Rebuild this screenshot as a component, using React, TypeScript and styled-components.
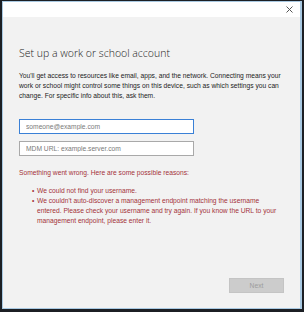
import React from "react";
import styled, { createGlobalStyle } from "styled-components";

const colors = {
  frame: "#1c1f24",
  accent: "#a9c9e2",
  titleBar: "#ffffff",
  body: "#f2f2f2",
  text: "#1f1f1f",
  error: "#a4323a",
  focus: "#3a80d6",
  field: "#a9a9a9",
  placeholder: "#7a7a7a",
};

const GlobalStyle = createGlobalStyle`
  html, body {
    margin: 0;
    padding: 0;
    background: ${colors.frame};
  }
  * {
    box-sizing: border-box;
  }
`;

const Frame = styled.div`
  width: 304px;
  height: 312px;
  padding: 1px 2px 3px 2px;
  background: ${colors.frame};
  display: flex;
`;

const Window = styled.div`
  flex: 1;
  display: flex;
  flex-direction: column;
  border: 1px solid ${colors.accent};
  border-right-width: 2px;
  background: ${colors.body};
  font-family: "Liberation Sans", Arial, sans-serif;
  color: ${colors.text};
`;

const TitleBar = styled.div`
  height: 15px;
  background: ${colors.titleBar};
  display: flex;
  justify-content: flex-end;
  align-items: center;
  padding-right: 6px;
`;

const CloseButton = styled.button`
  width: 9px;
  height: 9px;
  padding: 0;
  border: none;
  background: none;
  display: flex;
  align-items: center;
  justify-content: center;
`;

const Body = styled.div`
  flex: 1;
  display: flex;
  flex-direction: column;
  padding: 29px 16px 15px 16px;
`;

const Heading = styled.h1`
  margin: 0;
  font-family: "Open Sans", "Liberation Sans", sans-serif;
  font-weight: 300;
  font-size: 10.5px;
  line-height: 14px;
  color: #222;
`;

const Intro = styled.p`
  margin: 11px 0 0 0;
  font-size: 6.7px;
  line-height: 10px;
  color: #222;
`;

const Fields = styled.div`
  display: flex;
  flex-direction: column;
  gap: 7px;
  margin-top: 18px;
`;

const Field = styled.input<{ $focused?: boolean }>`
  width: 175px;
  height: 15px;
  margin: 0;
  padding: 0 0 0 6px;
  background: #fff;
  border: 1px solid ${(p) => (p.$focused ? colors.focus : colors.field)};
  font-family: "Liberation Sans", Arial, sans-serif;
  font-size: 6.7px;
  color: ${colors.text};
  caret-color: #000;
  outline: none;
  &:focus {
    border-color: ${colors.focus};
  }
  &::placeholder {
    color: ${colors.placeholder};
  }
`;

const ErrorBlock = styled.div`
  margin-top: 12px;
  color: ${colors.error};
  font-size: 6.7px;
  line-height: 10px;
`;

const Reasons = styled.ul`
  margin: 8px 0 0 0;
  padding: 0 0 0 18px;
  list-style: none;
`;

const Reason = styled.li`
  position: relative;
  width: 243px;
  &::before {
    content: "•";
    position: absolute;
    left: -5px;
  }
`;

const Footer = styled.div`
  margin-top: auto;
  display: flex;
  justify-content: flex-end;
`;

const NextButton = styled.button`
  width: 55px;
  height: 15px;
  padding: 0;
  background: #cccccc;
  border: 1px solid #c4c4c4;
  color: #9c9c9c;
  font-family: "Liberation Sans", Arial, sans-serif;
  font-size: 6.7px;
`;

export default function App() {
  return (
    <>
      <GlobalStyle />
      <Frame>
        <Window>
          <TitleBar>
            <CloseButton aria-label="Close">
              <svg width="7" height="7" viewBox="0 0 7 7">
                <path d="M0.5 0.5L6.5 6.5M6.5 0.5L0.5 6.5" stroke="#555" strokeWidth="1" />
              </svg>
            </CloseButton>
          </TitleBar>
          <Body>
            <Heading>Set up a work or school account</Heading>
            <Intro>
              You'll get access to resources like email, apps, and the network. Connecting means your
              work or school might control some things on this device, such as which settings you can
              change. For specific info about this, ask them.
            </Intro>
            <Fields>
              <Field $focused autoFocus placeholder="someone@example.com" />
              <Field placeholder="MDM URL: example.server.com" />
            </Fields>
            <ErrorBlock>
              Something went wrong. Here are some possible reasons:
              <Reasons>
                <Reason>We could not find your username.</Reason>
                <Reason>
                  We couldn't auto-discover a management endpoint matching the username entered.
                  Please check your username and try again. If you know the URL to your management
                  endpoint, please enter it.
                </Reason>
              </Reasons>
            </ErrorBlock>
            <Footer>
              <NextButton disabled>Next</NextButton>
            </Footer>
          </Body>
        </Window>
      </Frame>
    </>
  );
}
